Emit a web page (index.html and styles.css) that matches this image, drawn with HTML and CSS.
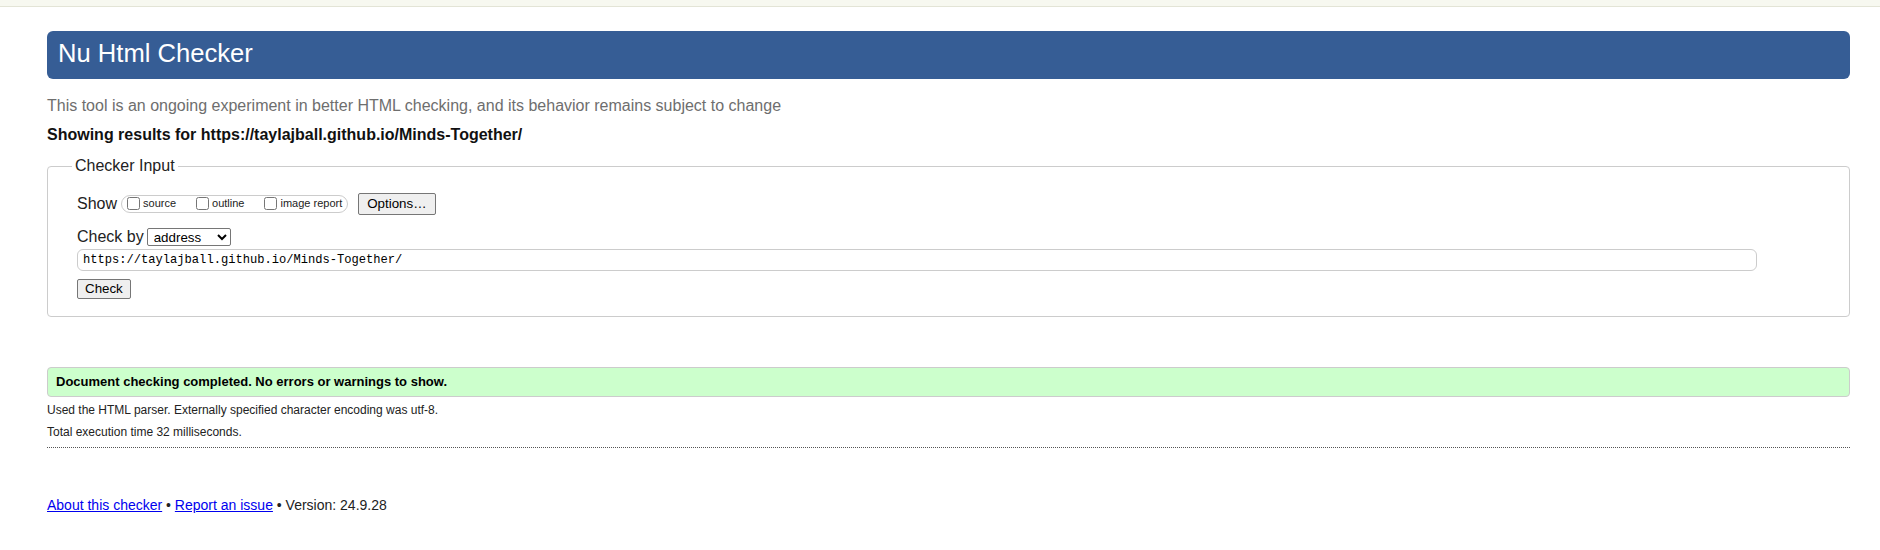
FILE: index.html
```html
<!DOCTYPE html>
<html lang="en">
<head>
<meta charset="utf-8">
<title>Nu Html Checker</title>
<link rel="stylesheet" href="styles.css">
</head>
<body>
<div class="topbar"></div>
<div class="page">
  <h1 class="title">Nu Html Checker</h1>
  <p class="intro">This tool is an ongoing experiment in better HTML checking, and its behavior remains subject to change</p>
  <p class="showing">Showing results for https://taylajball.github.io/Minds-Together/</p>
  <fieldset class="input-box">
    <legend class="legend">Checker Input</legend>
    <div class="row show-row">
      <span class="label">Show</span>
      <span class="show-group">
        <label class="opt"><input type="checkbox" class="cb">source</label>
        <label class="opt"><input type="checkbox" class="cb">outline</label>
        <label class="opt"><input type="checkbox" class="cb">image report</label>
      </span>
      <button class="btn options" type="button">Options…</button>
    </div>
    <div class="row by-row">
      <span class="label">Check by</span>
      <select class="sel"><option>address</option></select>
    </div>
    <input class="url" type="text" value="https://taylajball.github.io/Minds-Together/">
    <div class="row check-row"><button class="btn check" type="button">Check</button></div>
  </fieldset>
  <p class="success">Document checking completed. No errors or warnings to show.</p>
  <p class="note note-1">Used the HTML parser. Externally specified character encoding was utf-8.</p>
  <p class="note note-2">Total execution time 32 milliseconds.</p>
  <hr class="dotted">
  <p class="footer"><a class="link" href="#">About this checker</a> • <a class="link" href="#">Report an issue</a> • Version: 24.9.28</p>
</div>
</body>
</html>
```

FILE: styles.css
```css
html, body {
  margin: 0;
  padding: 0;
  background: #ffffff;
}

body {
  font-family: "Liberation Sans", Arial, sans-serif;
  color: #1a1a1a;
}

.topbar {
  height: 6px;
  background: #f7f8f0;
  border-bottom: 1px solid #e3e4d6;
}

.page {
  padding: 0 30px 0 47px;
}

.title {
  margin: 24px 0 0;
  height: 48px;
  box-sizing: border-box;
  padding: 8px 11px 11px;
  background: #365d95;
  color: #ffffff;
  border-radius: 6px;
  font-size: 25.6px;
  font-weight: normal;
  line-height: 29px;
}

.intro {
  margin: 18px 0 0;
  font-size: 16px;
  line-height: 18px;
  color: #6e6e6e;
}

.showing {
  margin: 11px 0 0;
  font-size: 16px;
  line-height: 18px;
  font-weight: bold;
  color: #111111;
}

.input-box {
  margin: 13px 0 0;
  padding: 18px 29px 17px;
  border: 1px solid #cccccc;
  border-radius: 4px;
}

.legend {
  margin-left: -5px;
  padding: 0 3px;
  font-size: 16px;
  line-height: 18px;
  color: #222222;
}

.row {
  display: flex;
  align-items: center;
}

.show-row {
  height: 21px;
}

.label {
  font-size: 16px;
  line-height: 18px;
  color: #222222;
}

.show-group {
  display: inline-flex;
  align-items: center;
  height: 16px;
  margin-left: 4px;
  padding: 0 5px 0 1px;
  border: 1px solid #cccccc;
  border-radius: 9px;
}

.opt {
  display: inline-flex;
  align-items: center;
  font-size: 11px;
  line-height: 13px;
  color: #222222;
}

.opt + .opt {
  margin-left: 16px;
}

.cb {
  width: 13px;
  height: 13px;
  margin: 0 3px 0 4px;
}

.btn {
  font-family: "Liberation Sans", Arial, sans-serif;
  font-size: 13.33px;
  line-height: 16px;
  color: #000000;
  background: #efefef;
  border: 1px solid #767676;
  border-radius: 2px;
  padding: 1px 7px;
}

.options {
  margin-left: 10px;
  padding: 2px 8px;
}

.by-row {
  margin-top: 14px;
  height: 18px;
}

.sel {
  margin-left: 3px;
  width: 84px;
  height: 18px;
  font-family: "Liberation Sans", Arial, sans-serif;
  font-size: 13.33px;
  color: #000000;
  border: 1px solid #767676;
  border-radius: 2px;
  background: #ffffff;
  padding: 0 2px;
}

.url {
  display: block;
  margin: 3px 0 0;
  width: 1680px;
  height: 22px;
  box-sizing: border-box;
  padding: 0 5px;
  border: 1px solid #cccccc;
  border-radius: 6px;
  font-family: "Liberation Mono", "DejaVu Sans Mono", monospace;
  font-size: 12.1px;
  color: #000000;
  outline: none;
}

.check-row {
  margin-top: 8px;
}

.check {
  height: 20px;
}

.success {
  margin: 50px 0 0;
  padding: 6px 8px 7px;
  border: 1px solid #cccccc;
  border-radius: 4px;
  background: #ccffcc;
  font-size: 13px;
  line-height: 15px;
  font-weight: bold;
  color: #000000;
}

.note {
  margin: 0;
  font-size: 12px;
  line-height: 16px;
  color: #222222;
}

.note-1 {
  margin-top: 5px;
}

.note-2 {
  margin-top: 6px;
}

.dotted {
  margin: 7px 0 0;
  height: 0;
  border: 0;
  border-top: 1px dotted #555555;
}

.footer {
  margin: 49px 0 0;
  font-size: 14px;
  line-height: 16px;
  color: #222222;
}

.link {
  color: #0000ee;
}
```
